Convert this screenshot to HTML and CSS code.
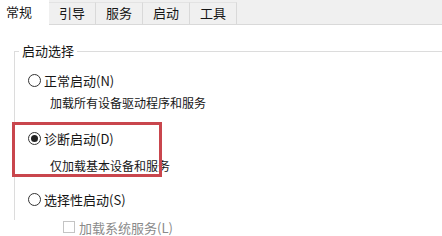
FILE: index.html
```html
<!DOCTYPE html>
<html lang="zh-CN">
<head>
    <meta charset="UTF-8">
    <title>系统配置</title>
    <link rel="stylesheet" href="styles.css">
</head>
<body>
    <div class="tabs">
        <div class="tab active">常规</div>
        <div class="tab">引导</div>
        <div class="tab">服务</div>
        <div class="tab">启动</div>
        <div class="tab">工具</div>
        <div class="tab-rest"></div>
    </div>

    <div class="page">
        <fieldset class="group">
            <legend>启动选择</legend>

            <div class="opts">
                <div class="option first">
                    <span class="radio"></span>
                    <span>正常启动(N)</span>
                </div>
                <div class="desc">加载所有设备驱动程序和服务</div>

                <div class="option">
                    <span class="radio checked"></span>
                    <span>诊断启动(D)</span>
                </div>
                <div class="desc second">仅加载基本设备和服务</div>

                <div class="option third">
                    <span class="radio"></span>
                    <span>选择性启动(S)</span>
                </div>
                <div class="check disabled">
                    <span class="box"></span>
                    <span>加载系统服务(L)</span>
                </div>

                <!-- red annotation box drawn over the screenshot -->
                <div class="highlight"></div>
            </div>
        </fieldset>
    </div>
</body>
</html>
```

FILE: styles.css
```css
body {
    margin: 0;
    height: 236px;
    background: #fff;
    font-family: "Noto Sans CJK SC", "Noto Sans", sans-serif;
    font-size: 13px;
    color: #161616;
    overflow: hidden;
}

.tabs {
    display: flex;
    height: 25px;
    background: #f0f0f0;
}

.tab {
    width: 47px;
    margin-top: 2px;
    border-top: 1px solid #e3e3e3;
    border-right: 1px solid #d9d9d9;
    border-bottom: 1px solid #d9d9d9;
    box-sizing: border-box;
    line-height: 20px;
    text-align: center;
}

.tab.active {
    width: 49px;
    margin-top: 0;
    border: none;
    background: #fff;
    text-align: left;
    padding-left: 6px;
    line-height: 24px;
}

.tab-rest {
    flex: 1;
    border-bottom: 1px solid #d9d9d9;
}

.page {
    padding: 18px 0 0 14px;
}

.group {
    margin: 0;
    padding: 11px 0 0 0;
    border: none;
    border-top: 1px solid #dcdcdc;
    border-left: 1px solid #dcdcdc;
    height: 165px;
}

.group legend {
    padding: 0 3px;
    margin-left: 4px;
    line-height: 16px;
}

.opts {
    position: relative;
}

.option {
    display: flex;
    align-items: center;
    gap: 3px;
    margin: 15px 0 0 13px;
    height: 20px;
}

.option.first {
    margin-top: 0;
}

.option.third {
    margin-top: 13px;
}

.radio {
    width: 13px;
    height: 13px;
    border: 1px solid #333;
    border-radius: 50%;
    box-sizing: border-box;
    display: flex;
    align-items: center;
    justify-content: center;
}

.radio.checked::after {
    content: "";
    width: 7px;
    height: 7px;
    border-radius: 50%;
    background: #222;
}

.desc {
    margin: 3px 0 0 35px;
    height: 20px;
    line-height: 20px;
    font-size: 12px;
}

.desc.second {
    margin-top: 8px;
}

.check {
    display: flex;
    align-items: center;
    gap: 4px;
    height: 20px;
    margin: 8px 0 0 48px;
}

.check .box {
    width: 12px;
    height: 12px;
    border: 1px solid #c4c4c4;
    box-sizing: border-box;
}

.disabled {
    color: #8a8a8a;
}

.highlight {
    position: absolute;
    left: -3px;
    top: 52px;
    width: 150px;
    height: 55px;
    border: 3px solid #c9464d;
    box-sizing: border-box;
}
```
